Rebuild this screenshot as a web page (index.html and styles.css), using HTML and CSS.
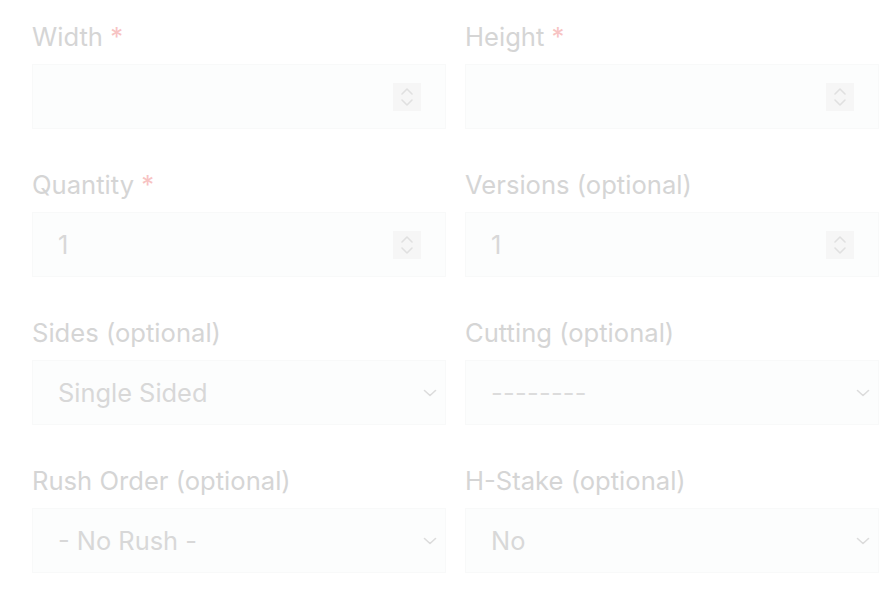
FILE: index.html
```html
<!DOCTYPE html>
<html lang="en">
<head>
    <meta charset="UTF-8">
    <meta name="viewport" content="width=device-width, initial-scale=1.0">
    <title>Print Options</title>
    <link rel="stylesheet" href="styles.css">
</head>
<body>

<form class="order-form">
    <div class="field">
        <label class="label">Width <span class="required">*</span></label>
        <div class="input number">
            <span class="value"></span>
            <span class="spinner">
                <svg width="12" height="18" viewBox="0 0 12 18"><path d="M1 6 L6 1 L11 6 M1 12 L6 17 L11 12" fill="none" stroke="#e0e0e0" stroke-width="1.6" stroke-linecap="round" stroke-linejoin="round"/></svg>
            </span>
        </div>
    </div>
    <div class="field">
        <label class="label">Height <span class="required">*</span></label>
        <div class="input number">
            <span class="value"></span>
            <span class="spinner">
                <svg width="12" height="18" viewBox="0 0 12 18"><path d="M1 6 L6 1 L11 6 M1 12 L6 17 L11 12" fill="none" stroke="#e0e0e0" stroke-width="1.6" stroke-linecap="round" stroke-linejoin="round"/></svg>
            </span>
        </div>
    </div>

    <div class="field">
        <label class="label">Quantity <span class="required">*</span></label>
        <div class="input number">
            <span class="value">1</span>
            <span class="spinner">
                <svg width="12" height="18" viewBox="0 0 12 18"><path d="M1 6 L6 1 L11 6 M1 12 L6 17 L11 12" fill="none" stroke="#e0e0e0" stroke-width="1.6" stroke-linecap="round" stroke-linejoin="round"/></svg>
            </span>
        </div>
    </div>
    <div class="field">
        <label class="label">Versions (optional)</label>
        <div class="input number">
            <span class="value">1</span>
            <span class="spinner">
                <svg width="12" height="18" viewBox="0 0 12 18"><path d="M1 6 L6 1 L11 6 M1 12 L6 17 L11 12" fill="none" stroke="#e0e0e0" stroke-width="1.6" stroke-linecap="round" stroke-linejoin="round"/></svg>
            </span>
        </div>
    </div>

    <div class="field">
        <label class="label">Sides (optional)</label>
        <div class="input select">
            <span class="value">Single Sided</span>
            <svg class="chevron" width="14" height="8" viewBox="0 0 14 8"><path d="M1.5 1.5 L7 6.5 L12.5 1.5" fill="none" stroke="#dcdcdc" stroke-width="1.6" stroke-linecap="round" stroke-linejoin="round"/></svg>
        </div>
    </div>
    <div class="field">
        <label class="label">Cutting (optional)</label>
        <div class="input select">
            <span class="value dashes">--------</span>
            <svg class="chevron" width="14" height="8" viewBox="0 0 14 8"><path d="M1.5 1.5 L7 6.5 L12.5 1.5" fill="none" stroke="#dcdcdc" stroke-width="1.6" stroke-linecap="round" stroke-linejoin="round"/></svg>
        </div>
    </div>

    <div class="field">
        <label class="label">Rush Order (optional)</label>
        <div class="input select">
            <span class="value">- No Rush -</span>
            <svg class="chevron" width="14" height="8" viewBox="0 0 14 8"><path d="M1.5 1.5 L7 6.5 L12.5 1.5" fill="none" stroke="#dcdcdc" stroke-width="1.6" stroke-linecap="round" stroke-linejoin="round"/></svg>
        </div>
    </div>
    <div class="field">
        <label class="label">H-Stake (optional)</label>
        <div class="input select">
            <span class="value">No</span>
            <svg class="chevron" width="14" height="8" viewBox="0 0 14 8"><path d="M1.5 1.5 L7 6.5 L12.5 1.5" fill="none" stroke="#dcdcdc" stroke-width="1.6" stroke-linecap="round" stroke-linejoin="round"/></svg>
        </div>
    </div>
</form>

</body>
</html>
```

FILE: styles.css
```css
* {
    margin: 0;
    padding: 0;
    box-sizing: border-box;
}

body {
    font-family: 'Inter', 'Noto Sans', sans-serif;
    background: #ffffff;
}

.order-form {
    display: grid;
    grid-template-columns: 414px 414px;
    column-gap: 19px;
    row-gap: 41px;
    padding: 22px 0 0 32px;
}

.field {
    display: flex;
    flex-direction: column;
}

.label {
    font-size: 25.6px;
    line-height: 30px;
    color: #d5d5d5;
    margin-bottom: 12px;
}

.required {
    color: #f7c3c3;
}

.input {
    height: 65px;
    background: #fcfdfd;
    border: 1px solid #f8f9f9;
    display: flex;
    align-items: center;
    justify-content: space-between;
    font-size: 25.4px;
    color: #d8d8d8;
}

.number {
    padding: 0 24px 0 25px;
}

.select {
    padding: 0 8px 0 25px;
}

.spinner {
    width: 28px;
    height: 28px;
    background: #f6f6f6;
    display: flex;
    align-items: center;
    justify-content: center;
}

.dashes {
    letter-spacing: 0.3px;
    color: #dcdcdc;
}
```
